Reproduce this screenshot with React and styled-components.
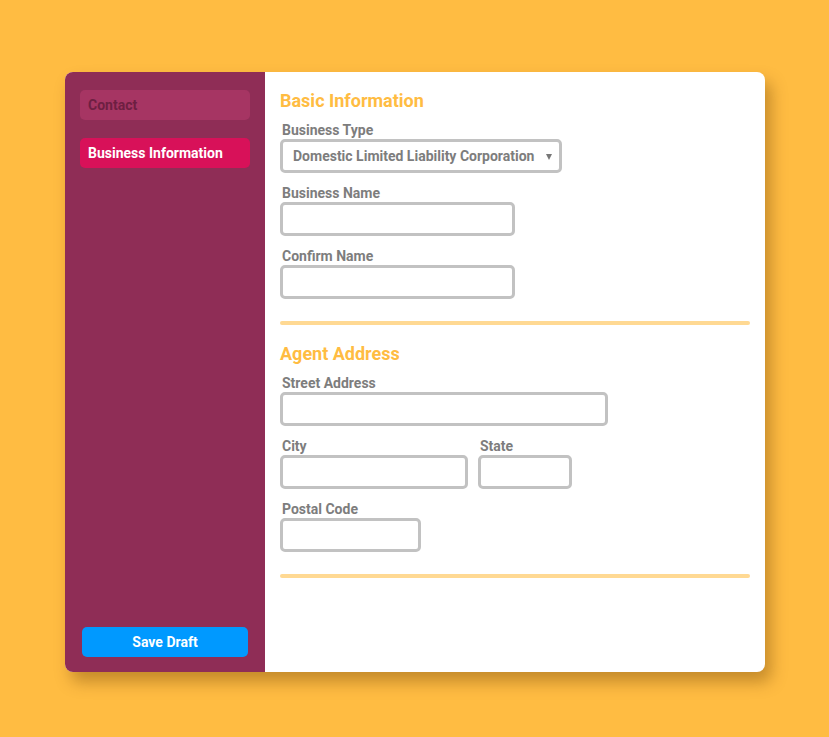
import React from "react";
import styled, { createGlobalStyle } from "styled-components";

const GlobalStyle = createGlobalStyle`
    html, body {
        margin: 0;
        padding: 0;
        background-color: #ffbc42;
        font-family: Roboto, "Liberation Sans", sans-serif;
    }
    * {
        box-sizing: border-box;
    }
`;

const Page = styled.div`
    width: 829px;
    height: 737px;
    padding: 72px 0 0 65px;
`;

const Card = styled.div`
    display: flex;
    width: 700px;
    height: 600px;
    border-radius: 8px;
    overflow: hidden;
    background-color: #fff;
    box-shadow: 6px 10px 16px rgba(90, 50, 0, 0.35);
`;

const Sidebar = styled.nav`
    display: flex;
    flex-direction: column;
    gap: 18px;
    width: 200px;
    padding: 18px 15px 15px;
    background-color: #8f2d56;
`;

const NavItem = styled.div`
    height: 30px;
    padding: 0 8px;
    border-radius: 5px;
    font-size: 14px;
    font-weight: 700;
    line-height: 30px;
    color: ${(p) => (p.active ? "#fff" : "#6e1f42")};
    background-color: ${(p) => (p.active ? "#d81159" : "#a63563")};
`;

const SaveButton = styled.button`
    margin: auto 2px 0;
    height: 30px;
    border: none;
    border-radius: 5px;
    background-color: #0099ff;
    color: #fff;
    font-family: inherit;
    font-size: 14px;
    font-weight: 700;
`;

const Main = styled.main`
    flex: 1;
    padding: 18px 15px 0;
`;

const Section = styled.section`
    display: flex;
    flex-direction: column;
    align-items: flex-start;
`;

const Heading = styled.h2`
    margin: 0 0 10px;
    font-size: 18px;
    line-height: 22px;
    font-weight: 700;
    color: #ffbc42;
`;

const Field = styled.div`
    display: flex;
    flex-direction: column;
    margin-bottom: 12px;
    &:last-child {
        margin-bottom: 0;
    }
`;

const Row = styled.div`
    display: flex;
    gap: 10px;
    margin-bottom: 12px;
    & > ${Field} {
        margin-bottom: 0;
    }
`;

const Label = styled.label`
    margin: 0 0 1px 2px;
    font-size: 14px;
    line-height: 16px;
    font-weight: 700;
    color: #7d7d7d;
`;

const Input = styled.input`
    width: ${(p) => p.w}px;
    height: 34px;
    border: 3px solid #c2c2c2;
    border-radius: 5px;
    background: #fff;
    outline: none;
`;

const SelectWrap = styled.div`
    position: relative;
    width: 282px;
    &::after {
        content: "";
        position: absolute;
        right: 10px;
        top: 15px;
        border-left: 3.5px solid transparent;
        border-right: 3.5px solid transparent;
        border-top: 6px solid #777;
        pointer-events: none;
    }
`;

const Select = styled.select`
    appearance: none;
    width: 100%;
    height: 34px;
    padding: 0 0 0 10px;
    border: 3px solid #c2c2c2;
    border-radius: 5px;
    background: #fff;
    font-family: inherit;
    font-size: 14px;
    font-weight: 700;
    color: #7d7d7d;
    outline: none;
`;

const Divider = styled.hr`
    width: 100%;
    height: 4px;
    margin: 22px 0 18px;
    border: none;
    border-radius: 2px;
    background-color: #ffd993;
`;

export default function App() {
    return (
        <Page>
            <GlobalStyle />
            <Card>
                <Sidebar>
                    <NavItem>Contact</NavItem>
                    <NavItem active>Business Information</NavItem>
                    <SaveButton>Save Draft</SaveButton>
                </Sidebar>
                <Main>
                    <Section>
                        <Heading>Basic Information</Heading>
                        <Field>
                            <Label>Business Type</Label>
                            <SelectWrap>
                                <Select defaultValue="dllc">
                                    <option value="dllc">Domestic Limited Liability Corporation</option>
                                </Select>
                            </SelectWrap>
                        </Field>
                        <Field>
                            <Label>Business Name</Label>
                            <Input w={235} />
                        </Field>
                        <Field>
                            <Label>Confirm Name</Label>
                            <Input w={235} />
                        </Field>
                    </Section>
                    <Divider />
                    <Section>
                        <Heading>Agent Address</Heading>
                        <Field>
                            <Label>Street Address</Label>
                            <Input w={328} />
                        </Field>
                        <Row>
                            <Field>
                                <Label>City</Label>
                                <Input w={188} />
                            </Field>
                            <Field>
                                <Label>State</Label>
                                <Input w={94} />
                            </Field>
                        </Row>
                        <Field>
                            <Label>Postal Code</Label>
                            <Input w={141} />
                        </Field>
                    </Section>
                    <Divider />
                </Main>
            </Card>
        </Page>
    );
}
